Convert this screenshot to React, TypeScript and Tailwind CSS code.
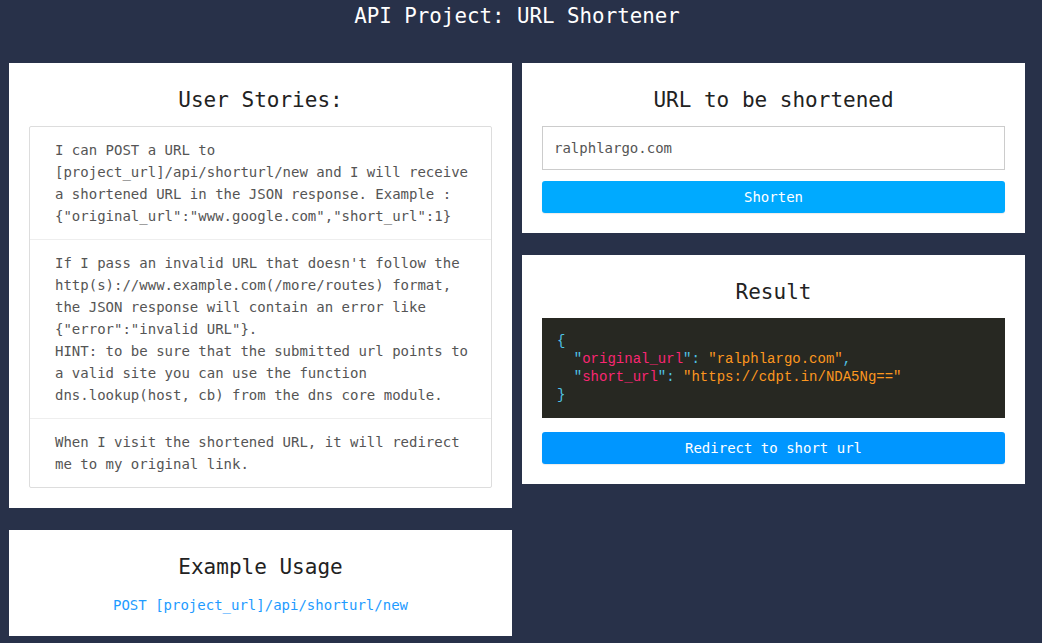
import React from "react";

const mono = "font-['DejaVu_Sans_Mono','Liberation_Mono',monospace]";

function Card({ children, className = "" }: { children: React.ReactNode; className?: string }) {
  return <div className={`w-[503px] bg-white px-[20px] pt-[20px] pb-[20px] ${className}`}>{children}</div>;
}

function CardTitle({ children, mb = "mb-[13px]" }: { children: React.ReactNode; mb?: string }) {
  return (
    <h3 className={`mt-[5px] ${mb} h-[25px] text-center text-[21px] leading-[25px] text-[#222]`}>{children}</h3>
  );
}

export default function App() {
  return (
    <div className={`min-h-screen bg-[#283149] ${mono}`}>
      <h1 className="pt-[4px] pr-[8px] h-[63px] text-center text-[20.8px] leading-[25px] text-white">API Project: URL Shortener</h1>
      <div className="flex gap-[10px] pl-[9px]">
        <div className="flex flex-col gap-[22px]">
          <Card>
            <CardTitle>User Stories:</CardTitle>
            <ul className="border border-[#ddd] rounded-[2px] text-[14px] leading-[22px] text-[#555] whitespace-nowrap">
              <li className="pl-[25px] py-[12px] border-b border-[#eee]">
                I can POST a URL to<br />
                [project_url]/api/shorturl/new and I will receive<br />
                a shortened URL in the JSON response. Example :<br />
                {'{"original_url":"www.google.com","short_url":1}'}
              </li>
              <li className="pl-[25px] py-[12px] border-b border-[#eee]">
                If I pass an invalid URL that doesn't follow the<br />
                http(s)://www.example.com(/more/routes) format,<br />
                the JSON response will contain an error like<br />
                {'{"error":"invalid URL"}.'}<br />
                HINT: to be sure that the submitted url points to<br />
                a valid site you can use the function<br />
                dns.lookup(host, cb) from the dns core module.
              </li>
              <li className="pl-[25px] py-[12px]">
                When I visit the shortened URL, it will redirect<br />
                me to my original link.
              </li>
            </ul>
          </Card>
          <Card>
            <CardTitle mb="mb-[14px]">Example Usage</CardTitle>
            <div className="text-center text-[14px] leading-[22px] text-[#1e9bff]">POST [project_url]/api/shorturl/new</div>
          </Card>
        </div>
        <div className="flex flex-col gap-[22px] items-start">
          <Card>
            <CardTitle>URL to be shortened</CardTitle>
            <div className="h-[44px] border border-[#ccc] flex items-center px-[11px] text-[14px] text-[#555]">ralphlargo.com</div>
            <button className="mt-[11px] w-full h-[32px] rounded-[3px] bg-[#00aaff] text-white text-[14px] shadow-[0_1px_1px_rgba(0,0,0,0.08)]">Shorten</button>
          </Card>
          <Card>
            <CardTitle>Result</CardTitle>
            <pre className="bg-[#272822] px-[15px] py-[14px] font-['Liberation_Mono',monospace] text-[14px] leading-[18px] h-[100px]">
              <span className="text-[#4fc3e6]">{"{"}</span>{"\n"}
              {"  "}<span className="text-[#4fc3e6]">"</span><span className="text-[#f92672]">original_url</span><span className="text-[#4fc3e6]">"</span><span className="text-[#4fc3e6]">: </span><span className="text-[#fd971f]">"ralphlargo.com"</span><span className="text-[#4fc3e6]">,</span>{"\n"}
              {"  "}<span className="text-[#4fc3e6]">"</span><span className="text-[#f92672]">short_url</span><span className="text-[#4fc3e6]">"</span><span className="text-[#4fc3e6]">: </span><span className="text-[#fd971f]">"https://cdpt.in/NDA5Ng=="</span>{"\n"}
              <span className="text-[#4fc3e6]">{"}"}</span>
            </pre>
            <button className="mt-[14px] w-full h-[32px] rounded-[3px] bg-[#0096ff] text-white text-[14px] shadow-[0_1px_1px_rgba(0,0,0,0.08)]">Redirect to short url</button>
          </Card>
        </div>
      </div>
    </div>
  );
}
